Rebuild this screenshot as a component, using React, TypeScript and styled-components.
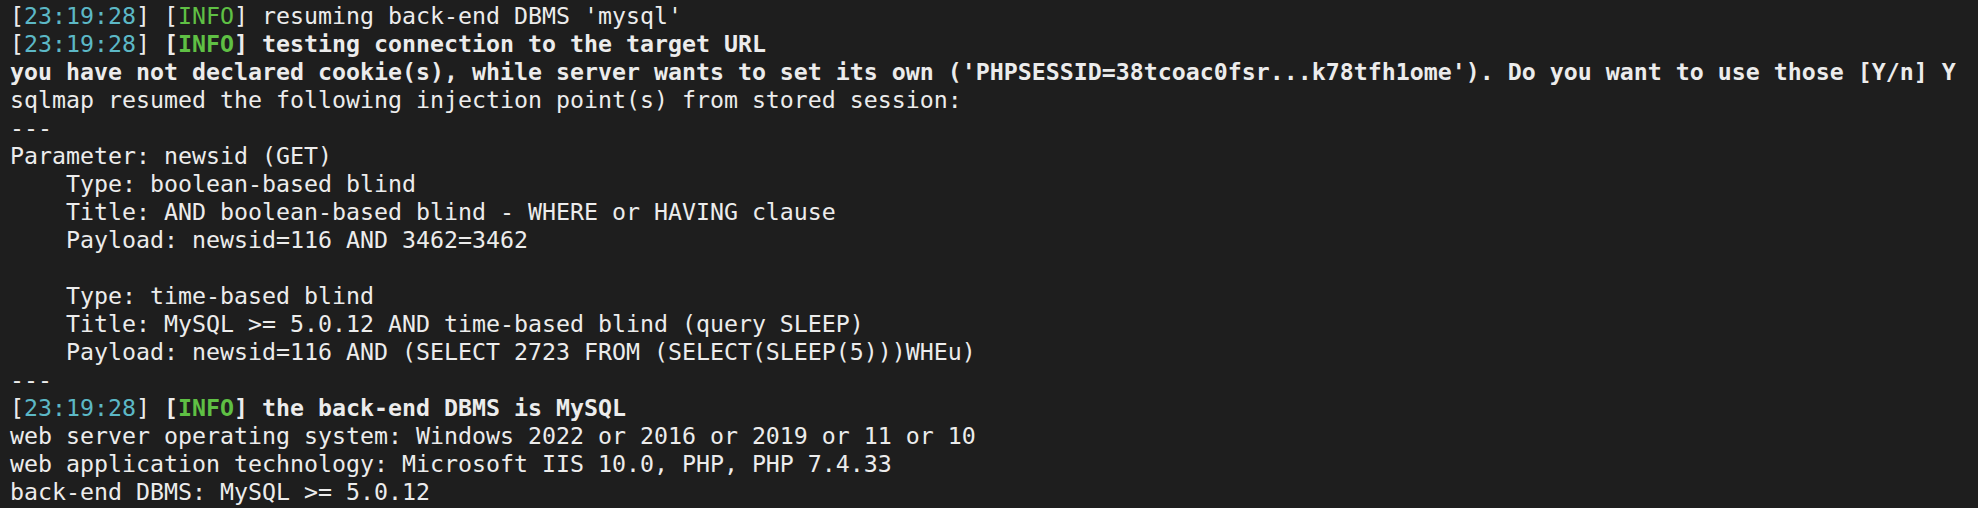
import React from "react";
import styled, { createGlobalStyle } from "styled-components";

const Global = createGlobalStyle`
  html, body {
    margin: 0;
    padding: 0;
    background: #1e1e1e;
  }
`;

const Terminal = styled.div`
  box-sizing: border-box;
  width: 1978px;
  height: 508px;
  overflow: hidden;
  background: #1e1e1e;
  color: #ececec;
  font-family: "DejaVu Sans Mono", "Liberation Mono", monospace;
  font-size: 23.25px;
  line-height: 28px;
  padding: 2px 0 0 10px;
  display: flex;
  flex-direction: column;
`;

const Line = styled.div<{ $bold?: boolean }>`
  white-space: pre;
  height: 28px;
  font-weight: ${(p) => (p.$bold ? 700 : 400)};
`;

const Time = styled.span`
  color: #5cb8c6;
  font-weight: 400;
`;

const Bracket = styled.span<{ $bold?: boolean }>`
  font-weight: ${(p) => (p.$bold ? 700 : 400)};
`;

const Level = styled.span<{ $bold?: boolean }>`
  color: #5fc044;
  font-weight: ${(p) => (p.$bold ? 700 : 400)};
`;

const Msg = styled.span<{ $bold?: boolean }>`
  font-weight: ${(p) => (p.$bold ? 700 : 400)};
`;

type LogProps = { bold?: boolean; text: string };

const LogLine = ({ bold, text }: LogProps) => (
  <Line>
    [<Time>23:19:28</Time>] <Bracket $bold={bold}>[</Bracket>
    <Level $bold={bold}>INFO</Level>
    <Bracket $bold={bold}>]</Bracket> <Msg $bold={bold}>{text}</Msg>
  </Line>
);

const plain: string[] = [];

export default function App() {
  return (
    <>
      <Global />
      <Terminal>
        <LogLine text="resuming back-end DBMS 'mysql'" />
        <LogLine bold text="testing connection to the target URL" />
        <Line $bold>
          you have not declared cookie(s), while server wants to set its own ('PHPSESSID=38tcoac0fsr...k78tfh1ome'). Do you want to use those [Y/n] Y
        </Line>
        <Line>sqlmap resumed the following injection point(s) from stored session:</Line>
        <Line>---</Line>
        <Line>Parameter: newsid (GET)</Line>
        <Line>{"    Type: boolean-based blind"}</Line>
        <Line>{"    Title: AND boolean-based blind - WHERE or HAVING clause"}</Line>
        <Line>{"    Payload: newsid=116 AND 3462=3462"}</Line>
        <Line>{" "}</Line>
        <Line>{"    Type: time-based blind"}</Line>
        <Line>{"    Title: MySQL >= 5.0.12 AND time-based blind (query SLEEP)"}</Line>
        <Line>{"    Payload: newsid=116 AND (SELECT 2723 FROM (SELECT(SLEEP(5)))WHEu)"}</Line>
        <Line>---</Line>
        <LogLine bold text="the back-end DBMS is MySQL" />
        <Line>web server operating system: Windows 2022 or 2016 or 2019 or 11 or 10</Line>
        <Line>web application technology: Microsoft IIS 10.0, PHP, PHP 7.4.33</Line>
        <Line>back-end DBMS: MySQL &gt;= 5.0.12</Line>
        {plain.map((t) => (
          <Line key={t}>{t}</Line>
        ))}
      </Terminal>
    </>
  );
}
